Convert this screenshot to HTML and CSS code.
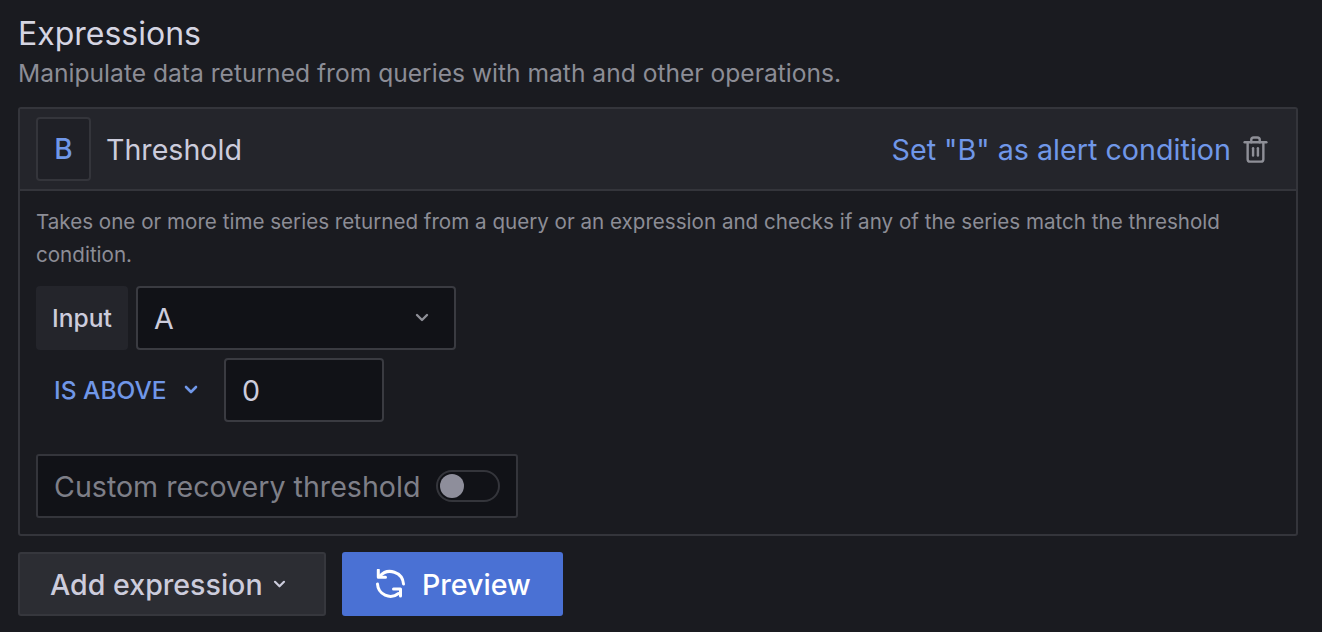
FILE: index.html
```html
<!DOCTYPE html>
<html lang="en">
<head>
  <meta charset="UTF-8">
  <title>Expressions</title>
  <link rel="stylesheet" href="styles.css">
</head>
<body>

  <h2 class="title">Expressions</h2>
  <p class="subtitle">Manipulate data returned from queries with math and other operations.</p>

  <div class="card">
    <div class="card-header">
      <div class="ref-box">B</div>
      <div class="card-name">Threshold</div>
      <a class="alert-link">Set "B" as alert condition</a>
      <svg class="trash" viewBox="0 0 24 24" fill="none" stroke="currentColor" stroke-width="2" stroke-linecap="round" stroke-linejoin="round">
        <path d="M3 6h18"/>
        <path d="M8.5 6V4a2 2 0 0 1 2-2h3a2 2 0 0 1 2 2v2"/>
        <path d="M5.5 6v14a2 2 0 0 0 2 2h9a2 2 0 0 0 2-2V6"/>
        <path d="M10 11v6"/>
        <path d="M14 11v6"/>
      </svg>
    </div>

    <div class="card-body">
      <p class="help">Takes one or more time series returned from a query or an expression and checks if any of the series match the threshold condition.</p>

      <div class="row input-row">
        <div class="field-label">Input</div>
        <div class="select">
          <span>A</span>
          <svg class="chev chev-grey" viewBox="0 0 16 10" fill="none" stroke="currentColor" stroke-width="2.4" stroke-linecap="round" stroke-linejoin="round"><path d="M3 2l5 5 5-5"/></svg>
        </div>
      </div>

      <div class="row cond-row">
        <div class="cond-type">
          IS ABOVE
          <svg class="chev" viewBox="0 0 16 10" fill="none" stroke="currentColor" stroke-width="2.6" stroke-linecap="round" stroke-linejoin="round"><path d="M3 2l5 5 5-5"/></svg>
        </div>
        <div class="number-input">0</div>
      </div>

      <div class="recovery">
        <span>Custom recovery threshold</span>
        <div class="switch"><div class="knob"></div></div>
      </div>
    </div>
  </div>

  <div class="actions">
    <button class="btn btn-grey">
      Add expression
      <svg class="chev chev-small" viewBox="0 0 16 10" fill="none" stroke="currentColor" stroke-width="2.4" stroke-linecap="round" stroke-linejoin="round"><path d="M3 2l5 5 5-5"/></svg>
    </button>
    <button class="btn btn-blue">
      <svg class="sync" viewBox="10 10 30 30" fill="none" stroke="currentColor" stroke-width="3" stroke-linecap="round" stroke-linejoin="round">
        <path d="M13.3 11v7.3h7.2"/>
        <path d="M15 17A13.5 13.5 0 0 1 38.5 25"/>
        <path d="M12.5 25A13 13 0 0 0 33.5 34.5"/>
        <path d="M35.5 37v-7h-7"/>
      </svg>
      Preview
    </button>
  </div>

</body>
</html>
```

FILE: styles.css
```css
* {
  margin: 0;
  padding: 0;
  box-sizing: border-box;
}

body {
  font-family: Inter, "Liberation Sans", sans-serif;
  background-color: #1a1b20;
  color: #ccccdc;
  height: 632px;
  padding: 12px 24px 0 18px;
  overflow: hidden;
}

.title {
  font-size: 32px;
  font-weight: 400;
  line-height: 43px;
  margin-bottom: 2px;
  color: #d5d5e2;
}

.subtitle {
  font-size: 24.6px;
  line-height: 32px;
  color: #8c8d96;
  margin-bottom: 18px;
}

.card {
  border: 2px solid #34353b;
  border-radius: 3px;
  height: 429px;
}

.card-header {
  display: flex;
  align-items: center;
  height: 82px;
  padding: 0 26px 0 16px;
  background-color: #24252b;
  border-bottom: 2px solid #34353b;
}

.ref-box {
  width: 55px;
  height: 64px;
  border: 2px solid #34353b;
  border-radius: 4px;
  background-color: #1f2026;
  color: #7097e8;
  font-size: 28px;
  font-weight: 500;
  display: flex;
  align-items: center;
  justify-content: center;
}

.card-name {
  font-size: 28.6px;
  margin-left: 15px;
  flex: 1;
  color: #ccccdc;
}

.alert-link {
  font-size: 28.7px;
  margin-right: -1px;
  color: #7097e8;
}

.trash {
  width: 29px;
  height: 29px;
  margin-left: 11px;
  color: #8e8f97;
}

.card-body {
  padding: 14px 16px 0;
}

.help {
  font-size: 20.6px;
  line-height: 33px;
  color: #8c8d96;
  margin-bottom: 15px;
}

.row {
  display: flex;
  align-items: center;
}

.input-row {
  gap: 8px;
}

.field-label {
  width: 92px;
  height: 64px;
  background-color: #24252b;
  border-radius: 4px;
  font-size: 24.6px;
  font-weight: 500;
  color: #ccccdc;
  display: flex;
  align-items: center;
  justify-content: center;
}

.select {
  width: 320px;
  height: 64px;
  background-color: #111217;
  border: 2px solid #3a3b41;
  border-radius: 4px;
  padding: 0 24px 0 16px;
  font-size: 28.6px;
  color: #ccccdc;
  display: flex;
  align-items: center;
  justify-content: space-between;
}

.cond-row {
  margin-top: 8px;
}

.cond-type {
  width: 188px;
  padding-left: 18px;
  font-size: 24.5px;
  font-weight: 500;
  color: #7097e8;
  display: flex;
  align-items: center;
  gap: 16px;
}

.chev {
  width: 16px;
  height: 10px;
  flex-shrink: 0;
}

.chev-grey {
  color: #8e8f97;
}

.chev-small {
  width: 15px;
  height: 9px;
}

.number-input {
  width: 160px;
  height: 64px;
  background-color: #111217;
  border: 2px solid #3a3b41;
  border-radius: 4px;
  padding-left: 16px;
  font-size: 28.6px;
  color: #ccccdc;
  display: flex;
  align-items: center;
}

.recovery {
  width: 482px;
  height: 64px;
  margin-top: 32px;
  background-color: #111217;
  border: 2px solid #34353b;
  border-radius: 3px;
  padding-left: 16px;
  font-size: 28.6px;
  color: #7e7f88;
  display: flex;
  align-items: center;
  gap: 16px;
}

.switch {
  width: 64px;
  height: 32px;
  border: 2px solid #34353b;
  border-radius: 16px;
  padding: 2px 0 0 2px;
}

.knob {
  width: 24px;
  height: 24px;
  border-radius: 50%;
  background-color: #8e8e9b;
}

.actions {
  display: flex;
  gap: 16px;
  margin-top: 16px;
}

.btn {
  height: 64px;
  border-radius: 3px;
  font-family: inherit;
  font-size: 28.6px;
  font-weight: 500;
  display: flex;
  align-items: center;
}

.btn-grey {
  width: 308px;
  padding-left: 30px;
  gap: 9px;
  background-color: #2c2d33;
  border: 2px solid #36373d;
  color: #ccccdc;
}

.btn-blue {
  width: 221px;
  padding-left: 33px;
  gap: 17px;
  background-color: #4a71d4;
  border: none;
  color: #fff;
}

.sync {
  width: 30px;
  height: 30px;
}
```
